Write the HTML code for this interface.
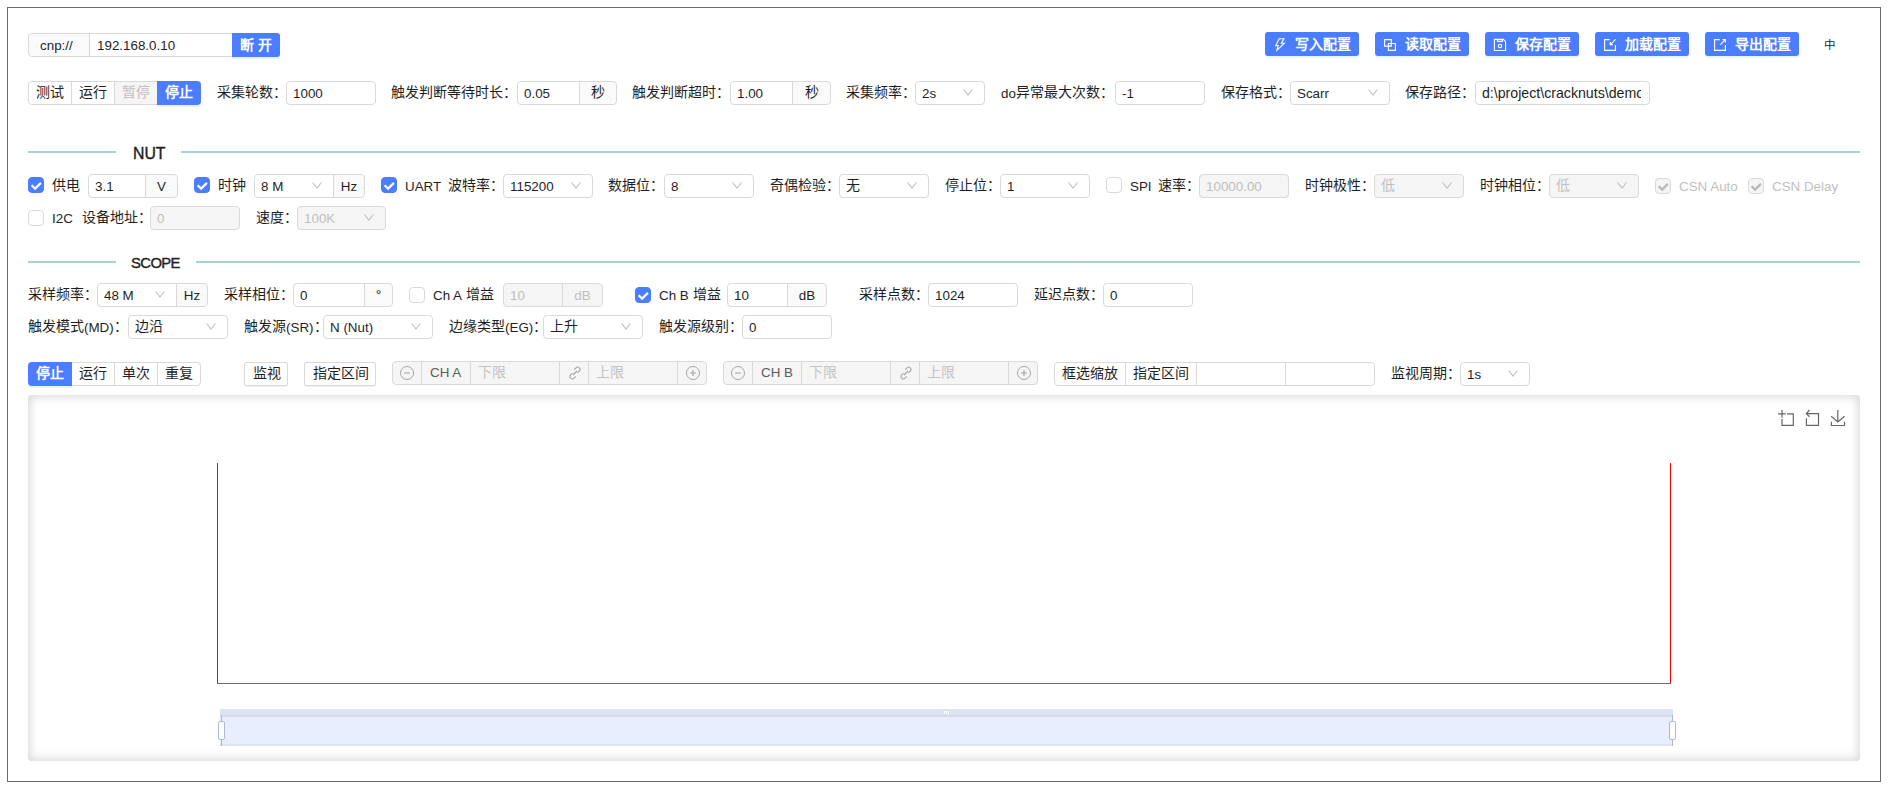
<!DOCTYPE html>
<html lang="zh-CN"><head><meta charset="utf-8"><title>CrackNuts</title><style>
html,body{margin:0;padding:0;background:#fff;}
body{width:1888px;height:791px;position:relative;overflow:hidden;font-family:"Liberation Sans",sans-serif;font-size:14px;color:#1f1f1f;}
.t{position:absolute;white-space:nowrap;}
.bx{position:absolute;box-sizing:border-box;border:1px solid #d9d9d9;border-radius:4px;line-height:22px;white-space:nowrap;overflow:hidden;}
.addon{position:absolute;top:-1px;height:24px;box-sizing:border-box;border:1px solid #d9d9d9;border-radius:0 4px 4px 0;line-height:22px;text-align:center;}
.arr{position:absolute;top:7px;line-height:0;}
.btnp{position:absolute;z-index:2;box-sizing:border-box;background:#4a7dff;color:#fff;line-height:24px;text-align:center;display:flex;align-items:center;justify-content:center;box-shadow:0 2px 0 rgba(5,145,255,0.1);white-space:nowrap;font-weight:700;}
.cb{position:absolute;width:16px;height:16px;box-sizing:border-box;border:1px solid #d9d9d9;border-radius:4px;overflow:hidden;}
.cb svg{position:absolute;left:-1px;top:-1px;}
.l{font-size:0.957em;}
.c{position:relative;top:-1px;}
.cell{position:absolute;top:0;height:22px;box-sizing:border-box;line-height:22px;display:flex;align-items:center;white-space:nowrap;}
</style></head>
<body>
<div style="position:absolute;left:7px;top:7px;width:1874px;height:775px;border:1px solid #6b6b6b;box-sizing:border-box"></div>
<div class="bx" style="left:28px;top:33px;width:62px;height:24px;background:#fafafa;border-radius:4px 0 0 4px;padding-left:11px"><span class="l">cnp://</span></div>
<div class="bx" style="left:89px;top:33px;width:144px;height:24px;border-radius:0;padding-left:7px"><span class="l">192.168.0.10</span></div>
<div class="btnp" style="left:232px;top:33px;width:48px;height:24px;border-radius:0 3px 3px 0;padding-top:2px;box-sizing:border-box"><span class="c">断 开</span></div>
<div class="btnp" style="left:1265px;top:32px;width:94px;height:24px;border-radius:3px;justify-content:flex-start;font-weight:700"><svg style="position:absolute;left:0;top:0" width="30" height="24" viewBox="0 0 30 24"><path d="M14.2 6.8 H19 L16.3 11.2 H19.4 L11.9 18.3 L13.2 13.6 H10.7 Z" fill="none" stroke="#fff" stroke-width="1.1" stroke-linejoin="miter"/></svg><span style="position:absolute;left:30px;top:1px;line-height:24px"><span class="c">写入配置</span></span></div>
<div class="btnp" style="left:1375px;top:32px;width:94px;height:24px;border-radius:3px;justify-content:flex-start;font-weight:700"><svg style="position:absolute;left:0;top:0" width="30" height="24" viewBox="0 0 30 24"><path d="M9.6 7.6 H16.3 V14.1 H9.6 Z M13.4 11.5 H20.4 V18.4 H13.4 Z" fill="none" stroke="#fff" stroke-width="1.1"/></svg><span style="position:absolute;left:30px;top:1px;line-height:24px"><span class="c">读取配置</span></span></div>
<div class="btnp" style="left:1485px;top:32px;width:94px;height:24px;border-radius:3px;justify-content:flex-start;font-weight:700"><svg style="position:absolute;left:0;top:0" width="30" height="24" viewBox="0 0 30 24"><path d="M9.4 7.4 H18.3 L20.6 9.7 V18.5 H9.4 Z M12.5 7.4 V9.4 H17.3 V7.4" fill="none" stroke="#fff" stroke-width="1.1"/><circle cx="15" cy="14" r="1.7" fill="none" stroke="#fff" stroke-width="1.1"/></svg><span style="position:absolute;left:30px;top:1px;line-height:24px"><span class="c">保存配置</span></span></div>
<div class="btnp" style="left:1595px;top:32px;width:94px;height:24px;border-radius:3px;justify-content:flex-start;font-weight:700"><svg style="position:absolute;left:0;top:0" width="30" height="24" viewBox="0 0 30 24"><path d="M14.8 7.6 H9.6 V18.4 H20.4 V13 M20.6 7.4 L15.4 12.6 M15.2 10 V12.8 H18" fill="none" stroke="#fff" stroke-width="1.1"/></svg><span style="position:absolute;left:30px;top:1px;line-height:24px"><span class="c">加载配置</span></span></div>
<div class="btnp" style="left:1705px;top:32px;width:94px;height:24px;border-radius:3px;justify-content:flex-start;font-weight:700"><svg style="position:absolute;left:0;top:0" width="30" height="24" viewBox="0 0 30 24"><path d="M14.8 7.6 H9.6 V18.4 H20.4 V13 M15.4 12.6 L20.4 7.6 M17.5 7.6 H20.4 V10.5" fill="none" stroke="#fff" stroke-width="1.1"/></svg><span style="position:absolute;left:30px;top:1px;line-height:24px"><span class="c">导出配置</span></span></div>
<div class="t" style="left:1824px;top:34px;height:24px;line-height:24px;color:#1f1f1f;font-size:11.5px;"><span class="c">中</span></div>
<div class="bx" style="left:28px;top:81px;width:44px;height:24px;border-radius:4px 0 0 4px;padding-left:7px"><span class="c">测试</span></div>
<div class="bx" style="left:71px;top:81px;width:44px;height:24px;border-radius:0;padding-left:7px"><span class="c">运行</span></div>
<div class="bx" style="left:114px;top:81px;width:44px;height:24px;border-radius:0;padding-left:7px;background:#f5f5f5;color:#bfbfbf"><span class="c">暂停</span></div>
<div class="btnp" style="left:157px;top:81px;width:44px;height:24px;border-radius:0 4px 4px 0"><span class="c">停止</span></div>
<div class="t" style="left:217px;top:81px;height:24px;line-height:24px;color:#1f1f1f;font-size:14px;"><span class="c">采集轮数：</span></div>
<div class="bx" style="left:286px;top:81px;width:90px;height:24px;background:#fff;color:#1f1f1f;border-radius:4px;padding-left:6px;"><span class="l">1000</span></div>
<div class="t" style="left:391px;top:81px;height:24px;line-height:24px;color:#1f1f1f;font-size:14px;"><span class="c">触发判断等待时长：</span></div>
<div class="bx" style="left:517px;top:81px;width:100px;height:24px;background:#fff;color:#1f1f1f;padding-left:6px"><span class="l">0.05</span><div class="addon" style="left:61px;width:38px;background:#fafafa;color:#1f1f1f"><span class="c">秒</span></div></div>
<div class="t" style="left:632px;top:81px;height:24px;line-height:24px;color:#1f1f1f;font-size:14px;"><span class="c">触发判断超时：</span></div>
<div class="bx" style="left:730px;top:81px;width:101px;height:24px;background:#fff;color:#1f1f1f;padding-left:6px"><span class="l">1.00</span><div class="addon" style="left:61px;width:39px;background:#fafafa;color:#1f1f1f"><span class="c">秒</span></div></div>
<div class="t" style="left:846px;top:81px;height:24px;line-height:24px;color:#1f1f1f;font-size:14px;"><span class="c">采集频率：</span></div>
<div class="bx" style="left:915px;top:81px;width:70px;height:24px;background:#fff;color:#1f1f1f;border-radius:4px;padding-left:6px;"><span class="l">2s</span><span class="arr" style="right:11px"><svg width="10" height="7" viewBox="0 0 10 7"><path d="M0.6 0.5 L5 6.1 L9.4 0.5" fill="none" stroke="#bfbfbf" stroke-width="1.1"/></svg></span></div>
<div class="t" style="left:1001px;top:81px;height:24px;line-height:24px;color:#1f1f1f;font-size:14px;"><span class="l">do</span><span class="c">异常最大次数：</span></div>
<div class="bx" style="left:1115px;top:81px;width:90px;height:24px;background:#fff;color:#1f1f1f;border-radius:4px;padding-left:6px;"><span class="l">-1</span></div>
<div class="t" style="left:1221px;top:81px;height:24px;line-height:24px;color:#1f1f1f;font-size:14px;"><span class="c">保存格式：</span></div>
<div class="bx" style="left:1290px;top:81px;width:100px;height:24px;background:#fff;color:#1f1f1f;border-radius:4px;padding-left:6px;"><span class="l">Scarr</span><span class="arr" style="right:11px"><svg width="10" height="7" viewBox="0 0 10 7"><path d="M0.6 0.5 L5 6.1 L9.4 0.5" fill="none" stroke="#bfbfbf" stroke-width="1.1"/></svg></span></div>
<div class="t" style="left:1405px;top:81px;height:24px;line-height:24px;color:#1f1f1f;font-size:14px;"><span class="c">保存路径：</span></div>
<div class="bx" style="left:1475px;top:81px;width:175px;height:24px;background:#fff;color:#1f1f1f;border-radius:4px;padding-left:6px;"><div style="width:159px;overflow:hidden;font-size:14.8px"><span class="l">d:\project\cracknuts\demo</span></div></div>
<div style="position:absolute;left:28px;top:151px;width:88px;height:2px;background:#a3d1de"></div>
<div style="position:absolute;left:181px;top:151px;width:1679px;height:2px;background:#a3d1de"></div>
<div class="t" style="left:133px;top:141px;height:24px;line-height:24px;font-size:16.5px;-webkit-text-stroke:0.4px #1f1f1f;letter-spacing:0px;color:#1f1f1f"><span class="l">NUT</span></div>
<div class="cb" style="left:28px;top:177px;background:#4a7dff;border-color:#4a7dff"><svg width="16" height="16" viewBox="0 0 16 16"><path d="M3.6 8.2 L7.1 11.6 L12.9 5.9" fill="none" stroke="#fff" stroke-width="2.2"/></svg></div>
<div class="t" style="left:52px;top:174px;height:24px;line-height:24px;color:#1f1f1f;font-size:14px;"><span class="c">供电</span></div>
<div class="bx" style="left:88px;top:174px;width:90px;height:24px;background:#fff;color:#1f1f1f;padding-left:6px"><span class="l">3.1</span><div class="addon" style="left:56px;width:33px;background:#fafafa;color:#1f1f1f"><span class="l">V</span></div></div>
<div class="cb" style="left:194px;top:177px;background:#4a7dff;border-color:#4a7dff"><svg width="16" height="16" viewBox="0 0 16 16"><path d="M3.6 8.2 L7.1 11.6 L12.9 5.9" fill="none" stroke="#fff" stroke-width="2.2"/></svg></div>
<div class="t" style="left:218px;top:174px;height:24px;line-height:24px;color:#1f1f1f;font-size:14px;"><span class="c">时钟</span></div>
<div class="bx" style="left:254px;top:174px;width:111px;height:24px;background:#fff;color:#1f1f1f;padding-left:6px"><span class="l">8 M</span><span class="arr" style="left:57px"><svg width="10" height="7" viewBox="0 0 10 7"><path d="M0.6 0.5 L5 6.1 L9.4 0.5" fill="none" stroke="#bfbfbf" stroke-width="1.1"/></svg></span><div class="addon" style="left:78px;width:32px;background:#fafafa;color:#1f1f1f"><span class="l">Hz</span></div></div>
<div class="cb" style="left:381px;top:177px;background:#4a7dff;border-color:#4a7dff"><svg width="16" height="16" viewBox="0 0 16 16"><path d="M3.6 8.2 L7.1 11.6 L12.9 5.9" fill="none" stroke="#fff" stroke-width="2.2"/></svg></div>
<div class="t" style="left:405px;top:174px;height:24px;line-height:24px;color:#1f1f1f;font-size:14px;"><span class="l">UART</span></div>
<div class="t" style="left:448px;top:174px;height:24px;line-height:24px;color:#1f1f1f;font-size:14px;"><span class="c">波特率：</span></div>
<div class="bx" style="left:503px;top:174px;width:90px;height:24px;background:#fff;color:#1f1f1f;border-radius:4px;padding-left:6px;"><span class="l">115200</span><span class="arr" style="right:11px"><svg width="10" height="7" viewBox="0 0 10 7"><path d="M0.6 0.5 L5 6.1 L9.4 0.5" fill="none" stroke="#bfbfbf" stroke-width="1.1"/></svg></span></div>
<div class="t" style="left:608px;top:174px;height:24px;line-height:24px;color:#1f1f1f;font-size:14px;"><span class="c">数据位：</span></div>
<div class="bx" style="left:664px;top:174px;width:90px;height:24px;background:#fff;color:#1f1f1f;border-radius:4px;padding-left:6px;"><span class="l">8</span><span class="arr" style="right:11px"><svg width="10" height="7" viewBox="0 0 10 7"><path d="M0.6 0.5 L5 6.1 L9.4 0.5" fill="none" stroke="#bfbfbf" stroke-width="1.1"/></svg></span></div>
<div class="t" style="left:770px;top:174px;height:24px;line-height:24px;color:#1f1f1f;font-size:14px;"><span class="c">奇偶检验：</span></div>
<div class="bx" style="left:839px;top:174px;width:90px;height:24px;background:#fff;color:#1f1f1f;border-radius:4px;padding-left:6px;"><span class="c">无</span><span class="arr" style="right:11px"><svg width="10" height="7" viewBox="0 0 10 7"><path d="M0.6 0.5 L5 6.1 L9.4 0.5" fill="none" stroke="#bfbfbf" stroke-width="1.1"/></svg></span></div>
<div class="t" style="left:945px;top:174px;height:24px;line-height:24px;color:#1f1f1f;font-size:14px;"><span class="c">停止位：</span></div>
<div class="bx" style="left:1000px;top:174px;width:90px;height:24px;background:#fff;color:#1f1f1f;border-radius:4px;padding-left:6px;"><span class="l">1</span><span class="arr" style="right:11px"><svg width="10" height="7" viewBox="0 0 10 7"><path d="M0.6 0.5 L5 6.1 L9.4 0.5" fill="none" stroke="#bfbfbf" stroke-width="1.1"/></svg></span></div>
<div class="cb" style="left:1106px;top:177px;background:#fff"></div>
<div class="t" style="left:1130px;top:174px;height:24px;line-height:24px;color:#1f1f1f;font-size:14px;"><span class="l">SPI</span></div>
<div class="t" style="left:1158px;top:174px;height:24px;line-height:24px;color:#1f1f1f;font-size:14px;"><span class="c">速率：</span></div>
<div class="bx" style="left:1199px;top:174px;width:90px;height:24px;background:#f5f5f5;color:#bfbfbf;border-radius:4px;padding-left:6px;"><span class="l">10000.00</span></div>
<div class="t" style="left:1305px;top:174px;height:24px;line-height:24px;color:#1f1f1f;font-size:14px;"><span class="c">时钟极性：</span></div>
<div class="bx" style="left:1374px;top:174px;width:90px;height:24px;background:#f5f5f5;color:#bfbfbf;border-radius:4px;padding-left:6px;"><span class="c">低</span><span class="arr" style="right:11px"><svg width="10" height="7" viewBox="0 0 10 7"><path d="M0.6 0.5 L5 6.1 L9.4 0.5" fill="none" stroke="#bfbfbf" stroke-width="1.1"/></svg></span></div>
<div class="t" style="left:1480px;top:174px;height:24px;line-height:24px;color:#1f1f1f;font-size:14px;"><span class="c">时钟相位：</span></div>
<div class="bx" style="left:1549px;top:174px;width:90px;height:24px;background:#f5f5f5;color:#bfbfbf;border-radius:4px;padding-left:6px;"><span class="c">低</span><span class="arr" style="right:11px"><svg width="10" height="7" viewBox="0 0 10 7"><path d="M0.6 0.5 L5 6.1 L9.4 0.5" fill="none" stroke="#bfbfbf" stroke-width="1.1"/></svg></span></div>
<div class="cb" style="left:1655px;top:178px;background:#f5f5f5"><svg width="16" height="16" viewBox="0 0 16 16"><path d="M3.6 8.2 L7.1 11.6 L12.9 5.9" fill="none" stroke="#b8b8b8" stroke-width="2.2"/></svg></div>
<div class="t" style="left:1679px;top:174px;height:24px;line-height:24px;color:#bfbfbf;font-size:14px;"><span class="l">CSN Auto</span></div>
<div class="cb" style="left:1748px;top:178px;background:#f5f5f5"><svg width="16" height="16" viewBox="0 0 16 16"><path d="M3.6 8.2 L7.1 11.6 L12.9 5.9" fill="none" stroke="#b8b8b8" stroke-width="2.2"/></svg></div>
<div class="t" style="left:1772px;top:174px;height:24px;line-height:24px;color:#bfbfbf;font-size:14px;"><span class="l">CSN Delay</span></div>
<div class="cb" style="left:28px;top:210px;background:#fff"></div>
<div class="t" style="left:52px;top:206px;height:24px;line-height:24px;color:#1f1f1f;font-size:14px;"><span class="l">I2C</span></div>
<div class="t" style="left:82px;top:206px;height:24px;line-height:24px;color:#1f1f1f;font-size:14px;"><span class="c">设备地址：</span></div>
<div class="bx" style="left:150px;top:206px;width:90px;height:24px;background:#f5f5f5;color:#bfbfbf;border-radius:4px;padding-left:6px;"><span class="l">0</span></div>
<div class="t" style="left:256px;top:206px;height:24px;line-height:24px;color:#1f1f1f;font-size:14px;"><span class="c">速度：</span></div>
<div class="bx" style="left:297px;top:206px;width:89px;height:24px;background:#f5f5f5;color:#bfbfbf;border-radius:4px;padding-left:6px;"><span class="l">100K</span><span class="arr" style="right:11px"><svg width="10" height="7" viewBox="0 0 10 7"><path d="M0.6 0.5 L5 6.1 L9.4 0.5" fill="none" stroke="#bfbfbf" stroke-width="1.1"/></svg></span></div>
<div style="position:absolute;left:28px;top:261px;width:88px;height:2px;background:#a3d1de"></div>
<div style="position:absolute;left:196px;top:261px;width:1664px;height:2px;background:#a3d1de"></div>
<div class="t" style="left:131px;top:251px;height:24px;line-height:24px;font-size:15.5px;-webkit-text-stroke:0.4px #1f1f1f;letter-spacing:-0.6px;color:#1f1f1f"><span class="l">SCOPE</span></div>
<div class="t" style="left:28px;top:283px;height:24px;line-height:24px;color:#1f1f1f;font-size:14px;"><span class="c">采样频率：</span></div>
<div class="bx" style="left:97px;top:283px;width:111px;height:24px;background:#fff;color:#1f1f1f;padding-left:6px"><span class="l">48 M</span><span class="arr" style="left:57px"><svg width="10" height="7" viewBox="0 0 10 7"><path d="M0.6 0.5 L5 6.1 L9.4 0.5" fill="none" stroke="#bfbfbf" stroke-width="1.1"/></svg></span><div class="addon" style="left:78px;width:32px;background:#fafafa;color:#1f1f1f"><span class="l">Hz</span></div></div>
<div class="t" style="left:224px;top:283px;height:24px;line-height:24px;color:#1f1f1f;font-size:14px;"><span class="c">采样相位：</span></div>
<div class="bx" style="left:293px;top:283px;width:100px;height:24px;background:#fff;color:#1f1f1f;padding-left:6px"><span class="l">0</span><div class="addon" style="left:70px;width:29px;background:#fafafa;color:#1f1f1f">°</div></div>
<div class="cb" style="left:409px;top:287px;background:#fff"></div>
<div class="t" style="left:433px;top:283px;height:24px;line-height:24px;color:#1f1f1f;font-size:14px;"><span class="l">Ch A</span> <span class="c">增益</span></div>
<div class="bx" style="left:503px;top:283px;width:100px;height:24px;background:#f5f5f5;color:#bfbfbf;padding-left:6px"><span class="l">10</span><div class="addon" style="left:58px;width:41px;background:#f5f5f5;color:#bfbfbf"><span class="l">dB</span></div></div>
<div class="cb" style="left:635px;top:287px;background:#4a7dff;border-color:#4a7dff"><svg width="16" height="16" viewBox="0 0 16 16"><path d="M3.6 8.2 L7.1 11.6 L12.9 5.9" fill="none" stroke="#fff" stroke-width="2.2"/></svg></div>
<div class="t" style="left:659px;top:283px;height:24px;line-height:24px;color:#1f1f1f;font-size:14px;"><span class="l">Ch B</span> <span class="c">增益</span></div>
<div class="bx" style="left:727px;top:283px;width:100px;height:24px;background:#fff;color:#1f1f1f;padding-left:6px"><span class="l">10</span><div class="addon" style="left:59px;width:40px;background:#fafafa;color:#1f1f1f"><span class="l">dB</span></div></div>
<div class="t" style="left:859px;top:283px;height:24px;line-height:24px;color:#1f1f1f;font-size:14px;"><span class="c">采样点数：</span></div>
<div class="bx" style="left:928px;top:283px;width:90px;height:24px;background:#fff;color:#1f1f1f;border-radius:4px;padding-left:6px;"><span class="l">1024</span></div>
<div class="t" style="left:1034px;top:283px;height:24px;line-height:24px;color:#1f1f1f;font-size:14px;"><span class="c">延迟点数：</span></div>
<div class="bx" style="left:1103px;top:283px;width:90px;height:24px;background:#fff;color:#1f1f1f;border-radius:4px;padding-left:6px;"><span class="l">0</span></div>
<div class="t" style="left:28px;top:315px;height:24px;line-height:24px;color:#1f1f1f;font-size:14px;"><span class="c">触发模式</span><span class="l">(MD)</span><span class="c">：</span></div>
<div class="bx" style="left:128px;top:315px;width:100px;height:24px;background:#fff;color:#1f1f1f;border-radius:4px;padding-left:6px;"><span class="c">边沿</span><span class="arr" style="right:11px"><svg width="10" height="7" viewBox="0 0 10 7"><path d="M0.6 0.5 L5 6.1 L9.4 0.5" fill="none" stroke="#bfbfbf" stroke-width="1.1"/></svg></span></div>
<div class="t" style="left:244px;top:315px;height:24px;line-height:24px;color:#1f1f1f;font-size:14px;"><span class="c">触发源</span><span class="l">(SR)</span><span class="c">：</span></div>
<div class="bx" style="left:323px;top:315px;width:110px;height:24px;background:#fff;color:#1f1f1f;border-radius:4px;padding-left:6px;"><span class="l">N (Nut)</span><span class="arr" style="right:11px"><svg width="10" height="7" viewBox="0 0 10 7"><path d="M0.6 0.5 L5 6.1 L9.4 0.5" fill="none" stroke="#bfbfbf" stroke-width="1.1"/></svg></span></div>
<div class="t" style="left:449px;top:315px;height:24px;line-height:24px;color:#1f1f1f;font-size:14px;"><span class="c">边缘类型</span><span class="l">(EG)</span><span class="c">：</span></div>
<div class="bx" style="left:543px;top:315px;width:100px;height:24px;background:#fff;color:#1f1f1f;border-radius:4px;padding-left:6px;"><span class="c">上升</span><span class="arr" style="right:11px"><svg width="10" height="7" viewBox="0 0 10 7"><path d="M0.6 0.5 L5 6.1 L9.4 0.5" fill="none" stroke="#bfbfbf" stroke-width="1.1"/></svg></span></div>
<div class="t" style="left:659px;top:315px;height:24px;line-height:24px;color:#1f1f1f;font-size:14px;"><span class="c">触发源级别：</span></div>
<div class="bx" style="left:742px;top:315px;width:90px;height:24px;background:#fff;color:#1f1f1f;border-radius:4px;padding-left:6px;"><span class="l">0</span></div>
<div class="btnp" style="left:28px;top:362px;width:44px;height:24px;border-radius:4px 0 0 4px"><span class="c">停止</span></div>
<div class="bx" style="left:71px;top:362px;width:44px;height:24px;border-radius:0;padding-left:7px"><span class="c">运行</span></div>
<div class="bx" style="left:114px;top:362px;width:44px;height:24px;border-radius:0;padding-left:7px"><span class="c">单次</span></div>
<div class="bx" style="left:157px;top:362px;width:44px;height:24px;border-radius:0 4px 4px 0;padding-left:7px"><span class="c">重复</span></div>
<div class="bx" style="left:244px;top:362px;width:44px;height:24px;border-radius:2px;padding-left:8px;box-shadow:0 1px 1px rgba(0,0,0,0.06)"><span class="c">监视</span></div>
<div class="bx" style="left:304px;top:362px;width:72px;height:24px;border-radius:2px;padding-left:8px;box-shadow:0 1px 1px rgba(0,0,0,0.06)"><span class="c">指定区间</span></div>
<div class="bx" style="left:392px;top:361px;width:315px;height:24px;background:#f5f5f5;padding:0"><div class="cell" style="left:-1px;width:30px;justify-content:center"><svg width="16" height="16" viewBox="0 0 16 16"><circle cx="8" cy="8" r="6.5" fill="none" stroke="#a6a6a6" stroke-width="1"/><path d="M5 8 H11" stroke="#a6a6a6" stroke-width="1.2"/></svg></div><div class="cell" style="left:28px;width:50px;border-left:1px solid #d9d9d9;color:#5c5c5c;padding-left:8px"><span class="l">CH A</span></div><div class="cell" style="left:77px;width:90px;border-left:1px solid #d9d9d9;color:#c4c4c4;padding-left:7px"><span class="c">下限</span></div><div class="cell" style="left:166px;width:30px;border-left:1px solid #d9d9d9;justify-content:center"><svg width="14" height="14" viewBox="0 0 14 14"><path d="M6.2 3.6 L8 1.8 a2.3 2.3 0 0 1 3.3 3.3 L9.5 6.9 M7.8 10.4 L6 12.2 a2.3 2.3 0 0 1 -3.3 -3.3 L4.5 7.1 M5 9 L9 5" fill="none" stroke="#a6a6a6" stroke-width="1.1"/></svg></div><div class="cell" style="left:195px;width:90px;border-left:1px solid #d9d9d9;color:#c4c4c4;padding-left:7px"><span class="c">上限</span></div><div class="cell" style="left:284px;width:30px;border-left:1px solid #d9d9d9;justify-content:center"><svg width="16" height="16" viewBox="0 0 16 16"><circle cx="8" cy="8" r="6.5" fill="none" stroke="#a6a6a6" stroke-width="1"/><path d="M5 8 H11 M8 5 V11" stroke="#a6a6a6" stroke-width="1.2"/></svg></div></div>
<div class="bx" style="left:723px;top:361px;width:315px;height:24px;background:#f5f5f5;padding:0"><div class="cell" style="left:-1px;width:30px;justify-content:center"><svg width="16" height="16" viewBox="0 0 16 16"><circle cx="8" cy="8" r="6.5" fill="none" stroke="#a6a6a6" stroke-width="1"/><path d="M5 8 H11" stroke="#a6a6a6" stroke-width="1.2"/></svg></div><div class="cell" style="left:28px;width:50px;border-left:1px solid #d9d9d9;color:#5c5c5c;padding-left:8px"><span class="l">CH B</span></div><div class="cell" style="left:77px;width:90px;border-left:1px solid #d9d9d9;color:#c4c4c4;padding-left:7px"><span class="c">下限</span></div><div class="cell" style="left:166px;width:30px;border-left:1px solid #d9d9d9;justify-content:center"><svg width="14" height="14" viewBox="0 0 14 14"><path d="M6.2 3.6 L8 1.8 a2.3 2.3 0 0 1 3.3 3.3 L9.5 6.9 M7.8 10.4 L6 12.2 a2.3 2.3 0 0 1 -3.3 -3.3 L4.5 7.1 M5 9 L9 5" fill="none" stroke="#a6a6a6" stroke-width="1.1"/></svg></div><div class="cell" style="left:195px;width:90px;border-left:1px solid #d9d9d9;color:#c4c4c4;padding-left:7px"><span class="c">上限</span></div><div class="cell" style="left:284px;width:30px;border-left:1px solid #d9d9d9;justify-content:center"><svg width="16" height="16" viewBox="0 0 16 16"><circle cx="8" cy="8" r="6.5" fill="none" stroke="#a6a6a6" stroke-width="1"/><path d="M5 8 H11 M8 5 V11" stroke="#a6a6a6" stroke-width="1.2"/></svg></div></div>
<div class="bx" style="left:1054px;top:362px;width:321px;height:24px;padding:0"><div class="cell" style="left:-1px;width:72px;padding-left:8px;color:#1f1f1f"><span class="c">框选缩放</span></div><div class="cell" style="left:70px;width:72px;border-left:1px solid #d9d9d9;padding-left:7px;color:#1f1f1f"><span class="c">指定区间</span></div><div class="cell" style="left:141px;width:90px;border-left:1px solid #d9d9d9"></div><div class="cell" style="left:230px;width:90px;border-left:1px solid #d9d9d9"></div></div>
<div class="t" style="left:1391px;top:362px;height:24px;line-height:24px;color:#1f1f1f;font-size:14px;"><span class="c">监视周期：</span></div>
<div class="bx" style="left:1460px;top:362px;width:70px;height:24px;background:#fff;color:#1f1f1f;border-radius:4px;padding-left:6px;"><span class="l">1s</span><span class="arr" style="right:11px"><svg width="10" height="7" viewBox="0 0 10 7"><path d="M0.6 0.5 L5 6.1 L9.4 0.5" fill="none" stroke="#bfbfbf" stroke-width="1.1"/></svg></span></div>
<div style="position:absolute;left:28px;top:395px;width:1832px;height:366px;border-radius:4px;box-shadow:inset 0 0 12px rgba(0,0,0,0.2);background:#fff"></div>
<svg style="position:absolute;left:1774px;top:406px" width="76" height="24" viewBox="0 0 76 24"><g fill="none" stroke="#666" stroke-width="1.2"><path d="M8 4 V11.7 M8 13 V19.3 H19.3 V7.85 H13 M11.7 7.85 H4"/><path d="M32.4 12.3 V19.3 H44.5 V7.6 H32.4 M35.4 4 L32.4 7.6 L35.6 10.7"/><path d="M63.8 4 V16 M57.2 10.3 L63.8 16 L70.5 10.3 M57.4 15.7 V19.5 H70.5 V15.7"/></g></svg>
<div style="position:absolute;left:217px;top:463px;width:1px;height:221px;background:#008000"></div>
<div style="position:absolute;left:1670px;top:463px;width:1px;height:221px;background:#ff0000"></div>
<div style="position:absolute;left:217px;top:683px;width:1454px;height:1px;background:#6e7079"></div>
<div style="position:absolute;left:220px;top:709px;width:1453px;height:6px;background:#dee3f1"></div>
<div style="position:absolute;left:220px;top:715px;width:1453px;height:2px;background:#d6dcf0"></div>
<div style="position:absolute;left:220px;top:717px;width:1453px;height:27px;background:#e8eefd"></div>
<div style="position:absolute;left:220px;top:744px;width:1453px;height:2px;background:#dde3f5"></div>
<div style="position:absolute;left:944px;top:711px;width:1px;height:3px;background:#fff"></div>
<div style="position:absolute;left:946px;top:711px;width:1px;height:3px;background:#fff"></div>
<div style="position:absolute;left:948px;top:711px;width:1px;height:3px;background:#fff"></div>
<div style="position:absolute;left:221px;top:715px;width:1px;height:31px;background:#acb5d3"></div>
<div style="position:absolute;left:218px;top:721px;width:7px;height:19px;box-sizing:border-box;border:1px solid #aeb7d4;border-radius:2px;background:#fff"></div>
<div style="position:absolute;left:1672px;top:715px;width:1px;height:31px;background:#acb5d3"></div>
<div style="position:absolute;left:1669px;top:721px;width:7px;height:19px;box-sizing:border-box;border:1px solid #aeb7d4;border-radius:2px;background:#fff"></div>
</body></html>
